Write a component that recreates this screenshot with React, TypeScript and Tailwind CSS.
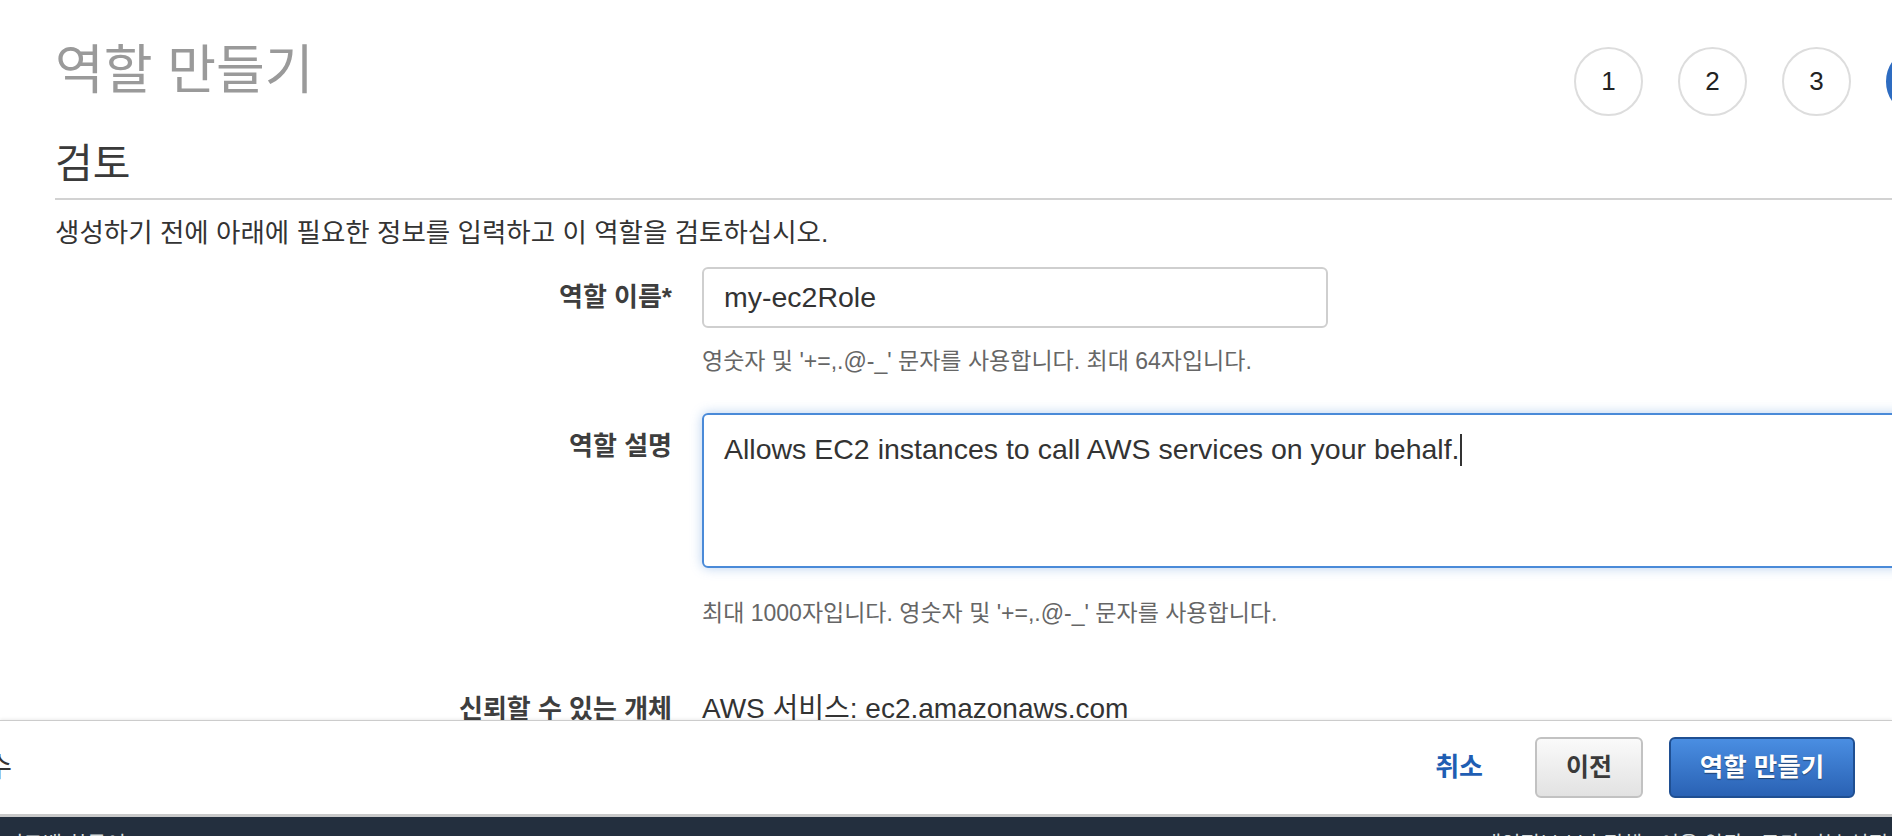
const font = "font-['Liberation_Sans','Noto_Sans_CJK_KR',sans-serif]";

function StepCircle({ n, active }: { n: number; active?: boolean }) {
  return (
    <div
      className={
        active
          ? "w-[69px] h-[69px] rounded-full bg-[#2e6cc1] border-2 border-[#2e6cc1] text-white flex items-center justify-center text-[26px] shrink-0"
          : "w-[69px] h-[69px] rounded-full border-2 border-[#dddddd] text-[#222] flex items-center justify-center text-[26px] shrink-0"
      }
    >
      {n}
    </div>
  );
}

export default function App() {
  return (
    <div className={`w-[1892px] h-[836px] overflow-hidden bg-white flex flex-col ${font}`}>
      {/* scrolled content */}
      <div className="h-[720px] overflow-hidden shrink-0">
        <div className="w-[1955px] pl-[55px]">
          <div className="h-[118px] flex justify-between items-start">
            <h1 className="mt-[41px] text-[53px] leading-[60px] text-[#9a9a9a] font-normal">역할 만들기</h1>
            <div className="mt-[47px] flex gap-[35px]">
              <StepCircle n={1} />
              <StepCircle n={2} />
              <StepCircle n={3} />
              <StepCircle n={4} active />
            </div>
          </div>

          <h2 className="mt-[23px] text-[41px] leading-[46px] text-[#3a3a3a]">검토</h2>
          <div className="mt-[11px] border-t-2 border-[#d2d2d2]" />
          <p className="mt-[16px] text-[26.5px] leading-[34px] text-[#333]">
            생성하기 전에 아래에 필요한 정보를 입력하고 이 역할을 검토하십시오.
          </p>

          {/* role name */}
          <div className="mt-[17px] flex items-center gap-[30px]">
            <div className="w-[617px] shrink-0 text-right text-[26px] font-bold text-[#3e3e3e]">역할 이름*</div>
            <div className="w-[626px] shrink-0 h-[61px] border-2 border-[#cfcfcf] rounded-[6px] flex items-center pl-[20px] text-[28.5px] text-[#333]">
              my-ec2Role
            </div>
          </div>
          <p className="ml-[647px] mt-[18px] text-[23px] leading-[30px] text-[#666]">
            영숫자 및 '+=,.@-_' 문자를 사용합니다. 최대 64자입니다.
          </p>

          {/* description */}
          <div className="mt-[37px] flex items-start gap-[30px]">
            <div className="w-[617px] shrink-0 mt-[17px] text-right text-[26px] leading-[32px] font-bold text-[#3e3e3e]">
              역할 설명
            </div>
            <div className="w-[1300px] shrink-0 h-[155px] border-2 border-[#4a8ad8] rounded-[6px] shadow-[0_0_12px_rgba(74,138,216,0.4)] pl-[20px] pt-[17px] text-[28.5px] leading-[34px] text-[#333] flex items-start">
              <span>Allows EC2 instances to call AWS services on your behalf.</span>
              <span className="inline-block w-[2px] h-[32px] bg-[#333] mt-[2px]" />
            </div>
          </div>
          <p className="ml-[647px] mt-[30px] text-[23px] leading-[30px] text-[#666]">
            최대 1000자입니다. 영숫자 및 '+=,.@-_' 문자를 사용합니다.
          </p>

          {/* trusted entity */}
          <div className="mt-[65px] flex items-center gap-[30px]">
            <div className="w-[617px] shrink-0 text-right text-[26px] leading-[32px] font-bold text-[#3e3e3e]">신뢰할 수 있는 개체</div>
            <div className="text-[28px] leading-[32px] text-[#333] whitespace-nowrap">AWS 서비스: ec2.amazonaws.com</div>
          </div>
        </div>
      </div>

      {/* sticky footer */}
      <div className="h-[97px] shrink-0 border-t border-[#cccccc] border-b-[3px] border-b-[#c9c9c9] shadow-[0_-1px_3px_rgba(0,0,0,0.08)] flex items-center">
        <div className="w-[12px] overflow-hidden flex justify-end">
          <span className="whitespace-nowrap text-[28px] text-[#333]">필수</span>
        </div>
        <div className="flex-1 flex items-center justify-end pr-[37px]">
          <a className="mr-[52px] text-[26px] font-bold text-[#1f5eb3]">취소</a>
          <button className="w-[108px] h-[61px] rounded-[6px] border-2 border-[#c2c2c2] bg-gradient-to-b from-[#fafafa] to-[#e2e2e2] text-[25px] font-bold text-[#3a3a3a]">
            이전
          </button>
          <button className="ml-[26px] w-[186px] h-[61px] rounded-[6px] border-2 border-[#1f4f92] bg-gradient-to-b from-[#4a8ee2] to-[#2a62b4] text-[25.5px] font-bold text-white [text-shadow:0_1px_1px_rgba(0,0,0,0.45)]">
            역할 만들기
          </button>
        </div>
      </div>

      {/* console footer */}
      <div className="h-[19px] shrink-0 bg-[#232f3e] overflow-hidden flex justify-between text-[21px] leading-[28px] text-[#d5dbdb] pt-[13px]">
        <div className="pl-[4px] whitespace-nowrap">피드백 한국어</div>
        <div className="whitespace-nowrap pr-[4px]">
          개인정보 보호정책&nbsp;&nbsp;&nbsp;이용 약관&nbsp;&nbsp;&nbsp;쿠키 기본 설정
        </div>
      </div>
    </div>
  );
}
